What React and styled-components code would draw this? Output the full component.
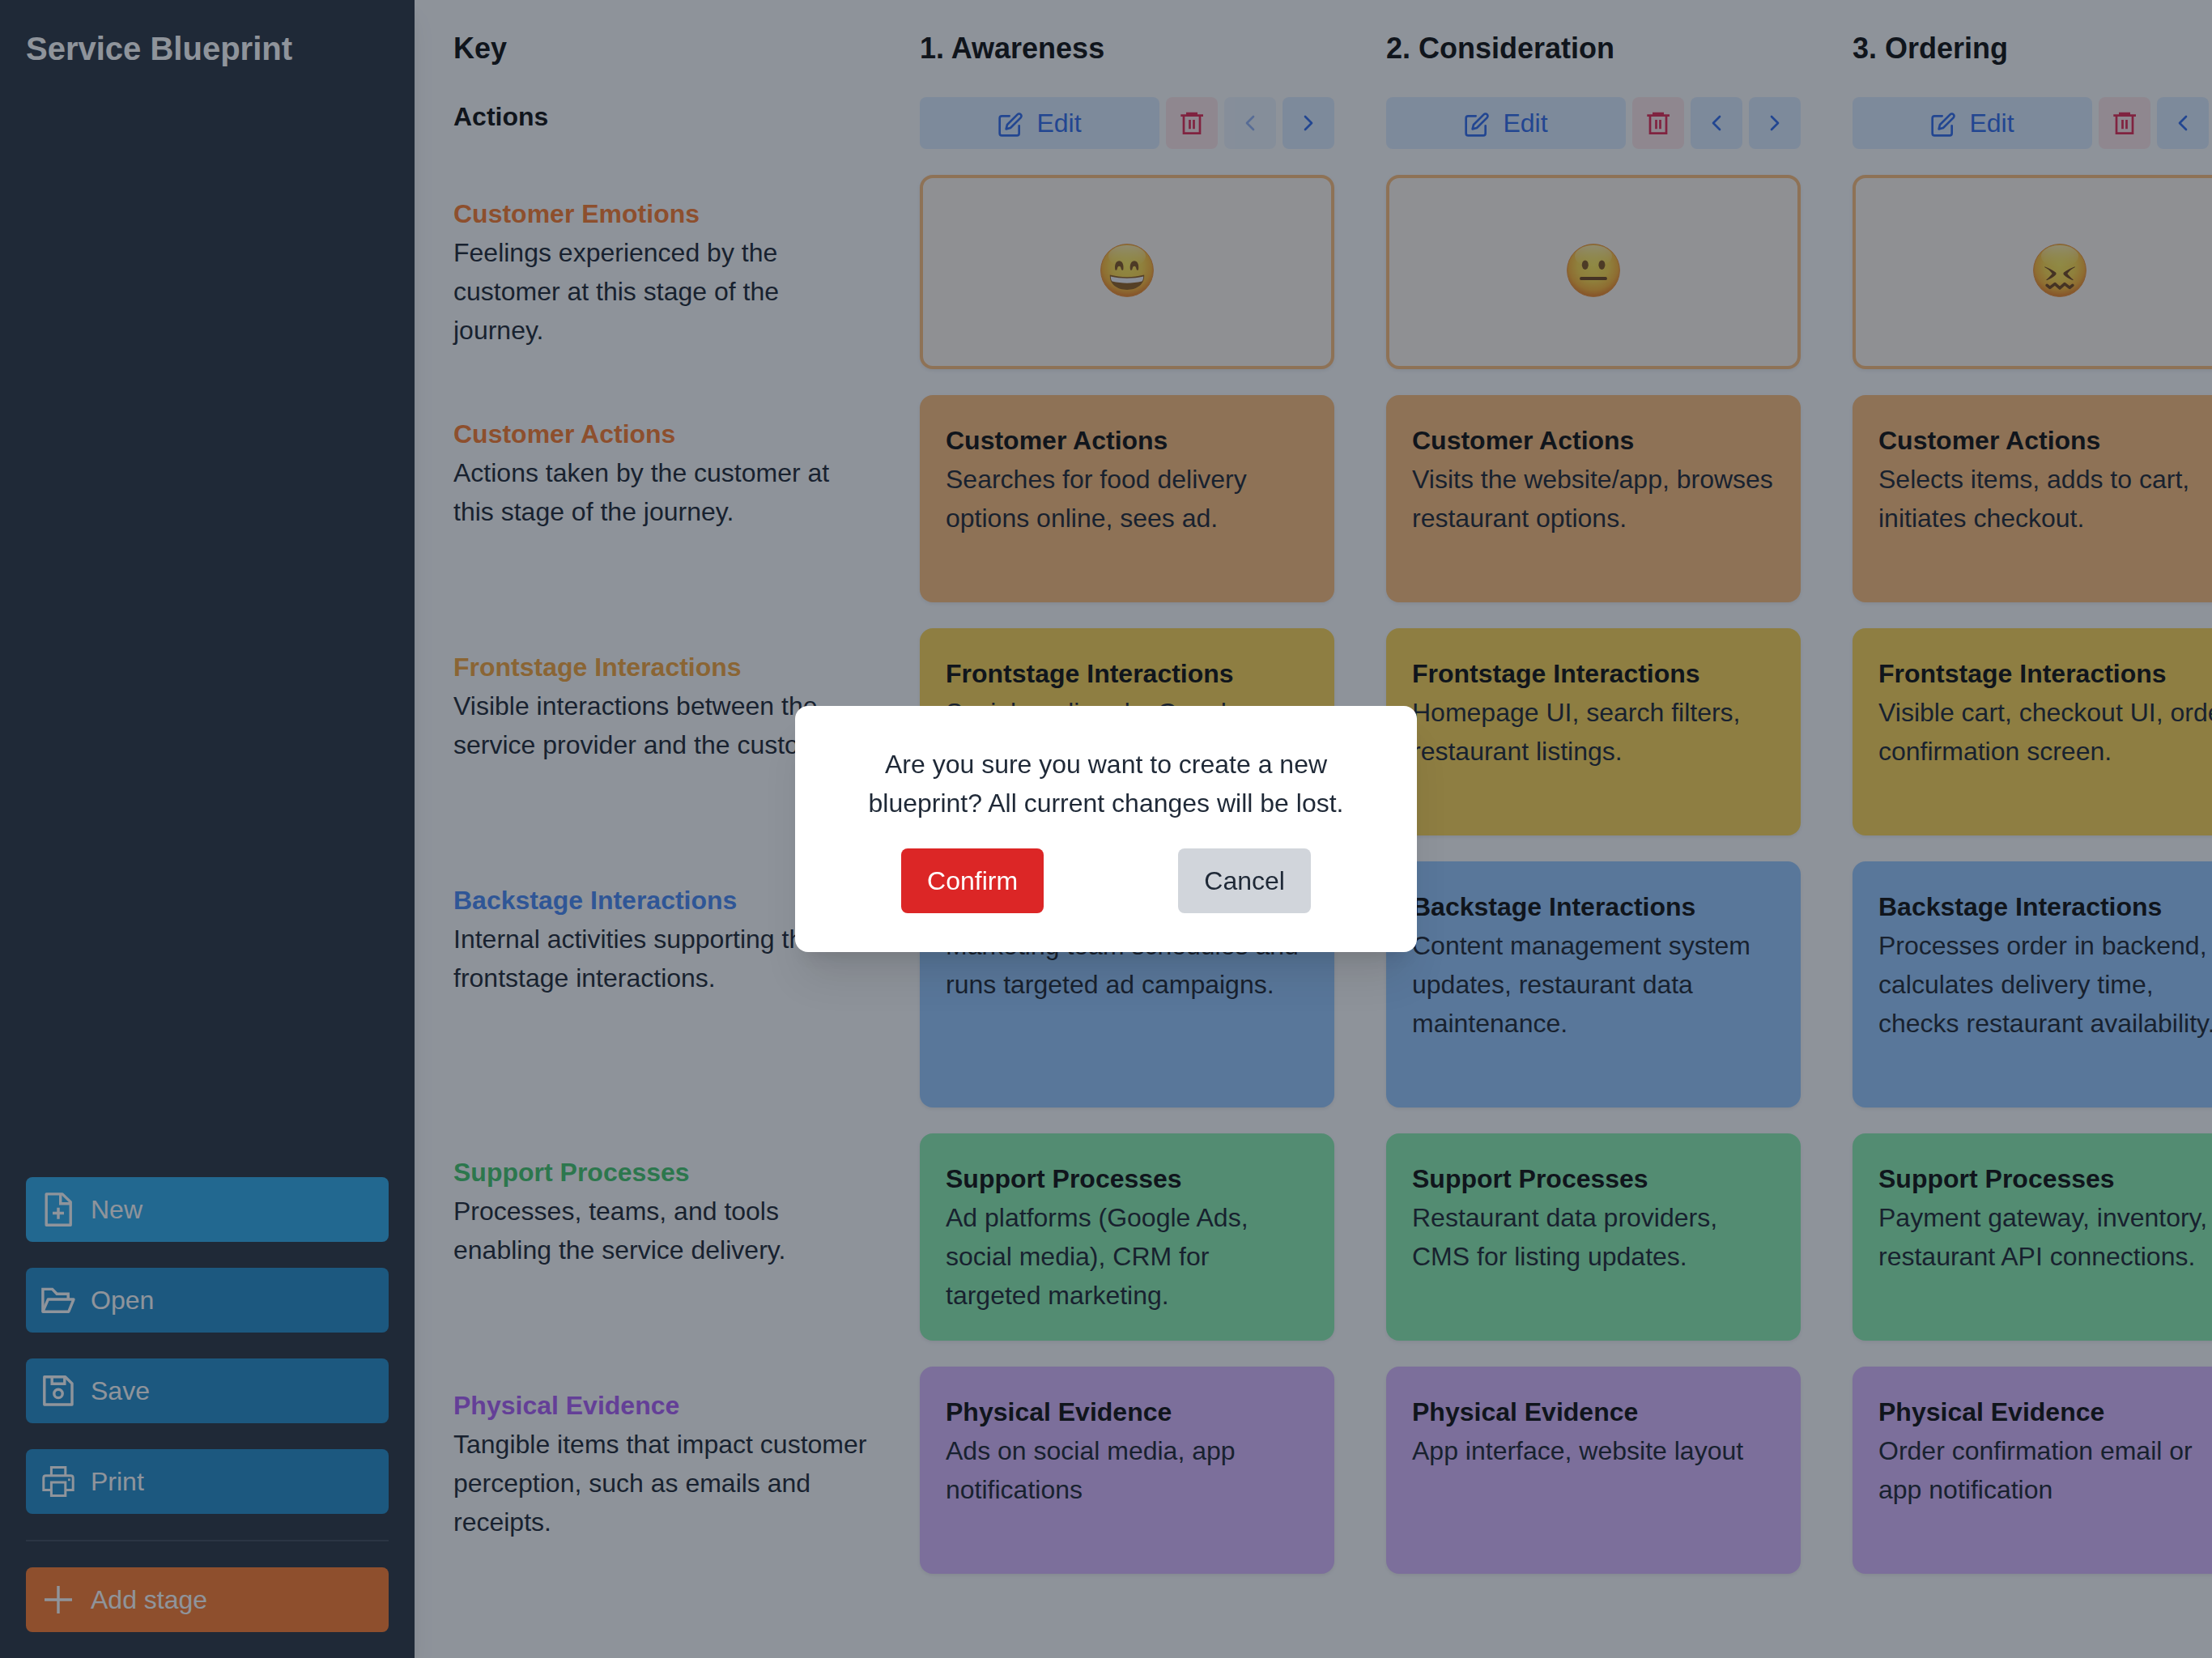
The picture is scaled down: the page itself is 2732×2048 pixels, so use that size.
import React, { Fragment } from "react";
import styled, { createGlobalStyle, css } from "styled-components";
import { FiChevronLeft, FiChevronRight, FiEdit } from "react-icons/fi";

const GlobalStyle = createGlobalStyle`
  *, *::before, *::after { box-sizing: border-box; }
  body {
    margin: 0;
    overflow: hidden;
    background: #fcfcfd;
    color: #111827;
    font-family: "Liberation Sans", Arial, sans-serif;
    font-size: 32px;
    line-height: 48px;
  }
  h1, h2, h3, p { margin: 0; }
  button { font: inherit; border: 0; cursor: pointer; }
`;

/* ---------- layout ---------- */

const Page = styled.div`
  display: flex;
  height: 100vh;
`;

const Sidebar = styled.aside`
  flex: 0 0 512px;
  display: flex;
  flex-direction: column;
  justify-content: space-between;
  padding: 32px;
  background: #1f2937;
  color: #fff;
  box-shadow: 0 20px 30px -6px rgba(0, 0, 0, 0.1), 0 8px 12px -4px rgba(0, 0, 0, 0.1);
`;

const AppTitle = styled.h1`
  font-size: 40px;
  line-height: 56px;
`;

const Menu = styled.nav`
  display: flex;
  flex-direction: column;
  gap: 32px;
`;

const menuTones = {
  blue: "#1887c7",
  bright: "#25a6e8",
  orange: "#fd7523",
};

const MenuButton = styled.button`
  display: flex;
  align-items: center;
  gap: 16px;
  padding: 16px;
  border-radius: 8px;
  background: ${({ $tone }) => menuTones[$tone]};
  color: inherit;
  text-align: left;

  svg {
    flex: none;
    width: 48px;
    height: 48px;
  }
`;

const Divider = styled.hr`
  width: 100%;
  height: 2px;
  margin: 0;
  border: 0;
  background: #374151;
`;

const Board = styled.main`
  flex: 1;
  min-width: 0;
  overflow: hidden;
  padding: 32px 48px;
`;

const Grid = styled.div`
  display: grid;
  grid-template-columns: repeat(4, 512px);
  gap: 32px 64px;
`;

/* ---------- board parts ---------- */

const ColumnTitle = styled.h2`
  color: #000;
  font-size: 36px;
  line-height: 56px;
`;

const RowTitle = styled.h3`
  color: ${({ $color }) => $color || "#000"};
  font-size: 32px;
`;

const KeyCell = styled.div`
  padding: 24px 0;
`;

const Actions = styled.div`
  display: flex;
  gap: 8px;
`;

const actionTones = {
  blue: css`
    background: #dbeafe;
    color: #2563eb;
  `,
  rose: css`
    background: #ffe4e6;
    color: #e11d48;
  `,
};

const ActionButton = styled.button`
  flex: ${({ $wide }) => ($wide ? "1" : "0 0 64px")};
  height: 64px;
  padding: 8px;
  border-radius: 8px;
  ${({ $tone }) => actionTones[$tone || "blue"]}

  svg {
    width: 32px;
    height: 32px;
    ${({ $wide }) =>
      $wide
        ? css`
            margin-right: 16px;
            vertical-align: text-bottom;
          `
        : css`
            display: block;
            margin: 0 auto;
          `}
  }

  &:disabled {
    opacity: 0.5;
    cursor: default;
  }
`;

const Card = styled.article`
  min-height: ${({ $tall }) => ($tall ? "304px" : "256px")};
  padding: 32px;
  border-radius: 16px;
  background: ${({ $fill }) => $fill};
  box-shadow: 0 2px 4px rgba(0, 0, 0, 0.08);
`;

const EmotionCard = styled.div`
  display: flex;
  align-items: center;
  justify-content: center;
  padding-bottom: 4px;
  border: 4px solid #fdba74;
  border-radius: 16px;
  background: #fff6ee;
  box-shadow: 0 2px 4px rgba(0, 0, 0, 0.08);

  svg {
    width: 66px;
    height: 66px;
  }
`;

/* ---------- dialog ---------- */

const Backdrop = styled.div`
  position: fixed;
  inset: 0;
  display: flex;
  align-items: center;
  justify-content: center;
  background: rgba(31, 41, 55, 0.5);
`;

const Dialog = styled.section`
  width: 768px;
  padding: 48px;
  border-radius: 16px;
  background: #fff;
  color: #1f2937;
  text-align: center;
  box-shadow: 0 40px 50px -10px rgba(0, 0, 0, 0.1), 0 16px 20px -12px rgba(0, 0, 0, 0.1);
`;

const DialogActions = styled.div`
  display: flex;
  justify-content: space-around;
  margin-top: 32px;
`;

const DialogButton = styled.button`
  padding: 16px 32px;
  border-radius: 8px;
  background: ${({ $danger }) => ($danger ? "#dc2626" : "#d1d5db")};
  color: ${({ $danger }) => ($danger ? "#fff" : "#1f2937")};
`;

/* ---------- icons ---------- */

const LineIcon = ({ children, width = 3.4 }) => (
  <svg viewBox="0 0 48 48" fill="none" stroke="currentColor" strokeWidth={width} aria-hidden="true">
    {children}
  </svg>
);

const NewIcon = () => (
  <LineIcon>
    <path strokeLinejoin="round" d="M9.2 4.9H29L39.2 14.8V43.2H9.2Z" />
    <path d="M26.7 5V16.7H39" />
    <path d="M24 21.7V35.7M17 28.5H31" />
  </LineIcon>
);

const OpenIcon = () => (
  <LineIcon>
    <path d="M4.9 38V10.4H16.6L22.2 16.2H36.2V23" />
    <path strokeLinejoin="round" d="M4.9 38.2L11.4 23H43L36.8 38.2Z" />
  </LineIcon>
);

const SaveIcon = () => (
  <LineIcon>
    <path strokeLinejoin="round" d="M6.8 6.8H32.6L41 15V41H6.8Z" />
    <path d="M16.2 7V15.2H31.8V7" />
    <circle cx="24" cy="27.4" r="5.2" />
  </LineIcon>
);

const PrintIcon = () => (
  <LineIcon width={3}>
    <path d="M15.4 16.5V6.4H32.8V16.5" />
    <path d="M15 34.4H5.8V19.5Q5.8 16.7 8.6 16.7H39.4Q42.2 16.7 42.2 19.5V34.4H33" />
    <path d="M15.4 25H32.8V41.6H15.4Z" />
    <rect x="36" y="20.4" width="2.8" height="2.8" fill="currentColor" stroke="none" />
  </LineIcon>
);

const PlusIcon = () => (
  <LineIcon>
    <path d="M24 7V41M7 24H41" />
  </LineIcon>
);

const TrashIcon = () => (
  <svg viewBox="0 0 32 32" aria-hidden="true">
    <path fill="currentColor" d="M9 2.7H23V5.4H9ZM2.3 5.3H30V8H2.3Z" />
    <path fill="none" stroke="currentColor" strokeWidth="2.7" d="M6 7V28.7H26V7" />
    <path fill="none" stroke="currentColor" strokeWidth="2.7" d="M13.5 12V23.3M18.5 12V23.3" />
  </svg>
);

const Face = ({ id, label, children }) => (
  <svg viewBox="0 0 66 66" role="img" aria-label={label}>
    <defs>
      <radialGradient id={`${id}-skin`} cx="0.5" cy="0.4" r="0.6">
        <stop offset="0" stopColor="#ffe94f" />
        <stop offset="0.5" stopColor="#ffd640" />
        <stop offset="0.78" stopColor="#fdb22c" />
        <stop offset="1" stopColor="#ec7a1a" />
      </radialGradient>
      <linearGradient id={`${id}-shine`} x1="0" y1="0" x2="0" y2="1">
        <stop offset="0" stopColor="#fffbd8" stopOpacity="0.7" />
        <stop offset="1" stopColor="#fff27a" stopOpacity="0" />
      </linearGradient>
    </defs>
    <circle cx="33" cy="33" r="32.4" fill={`url(#${id}-skin)`} stroke="#ee8e2c" strokeWidth="1" />
    <ellipse cx="33" cy="15.5" rx="23" ry="13.5" fill={`url(#${id}-shine)`} />
    {children}
  </svg>
);

const GrinningFace = () => (
  <Face id="grin" label="Happy">
    <path
      fill="#7b4c14"
      d="M18.2 31.5C17.4 25 19.8 21.2 23.3 21.2S29.2 25 28.4 31.5C28.2 33.4 26.4 33.2 25.8 31.2C25.2 28.8 24.6 27.8 23.3 27.8S21.4 28.8 20.8 31.2C20.2 33.2 18.4 33.4 18.2 31.5ZM36.9 31.5C36.1 25 38.5 21.2 42 21.2S47.9 25 47.1 31.5C46.9 33.4 45.1 33.2 44.5 31.2C43.9 28.8 43.3 27.8 42 27.8S40.1 28.8 39.5 31.2C38.9 33.2 37.1 33.4 36.9 31.5Z"
    />
    <path fill="#8a5614" d="M11.8 38.6C25 42 41 42 54.2 38.6C54.8 50 45.6 57 33 57S11.2 50 11.8 38.6Z" />
    <path fill="#f4f4fb" d="M12.8 40.4C26 43.4 40 43.4 53.2 40.4C53.2 43 52.6 45 51.4 46.6C39.4 49.4 26.6 49.4 14.6 46.6C13.4 45 12.8 43 12.8 40.4Z" />
  </Face>
);

const NeutralFace = () => (
  <Face id="neutral" label="Neutral">
    <ellipse cx="22.8" cy="26.2" rx="4" ry="5.8" fill="#7b4c14" />
    <ellipse cx="43.4" cy="26.2" rx="4" ry="5.8" fill="#7b4c14" />
    <rect x="16.2" y="41" width="33.6" height="4" rx="1.6" fill="#6b3d10" />
  </Face>
);

const ConfoundedFace = () => (
  <Face id="confounded" label="Frustrated">
    <path
      fill="#6b3d10"
      d="M14.2 28.2C19 30 24.5 32.4 28 35.6Q29.2 37 28 38.4C25.2 41 21.6 43.4 17 45.2C16.2 45 16.2 44.6 16.6 44.2C19.4 41.8 22 39.4 23.6 37C21.4 33.8 18.2 31 14.4 29.2ZM51.8 28.2C47 30 41.5 32.4 38 35.6Q36.8 37 38 38.4C40.8 41 44.4 43.4 49 45.2C49.8 45 49.8 44.6 49.4 44.2C46.6 41.8 44 39.4 42.4 37C44.6 33.8 47.8 31 51.6 29.2Z"
    />
    <path
      fill="none"
      stroke="#6b3d10"
      strokeWidth="3.6"
      strokeLinecap="round"
      strokeLinejoin="round"
      d="M17.2 51.4L20.8 54.4L27 49.6L33 54.8L39 49.6L45.2 54.4L48.8 51.4"
    />
  </Face>
);

/* ---------- data ---------- */

const layers = [
  {
    id: "customer",
    title: "Customer Actions",
    about: "Actions taken by the customer at this stage of the journey.",
    color: "#fb7523",
    fill: "#fdba74",
  },
  {
    id: "frontstage",
    title: "Frontstage Interactions",
    about: "Visible interactions between the service provider and the customer.",
    color: "#f5a030",
    fill: "#fcd34d",
  },
  {
    id: "backstage",
    title: "Backstage Interactions",
    about: "Internal activities supporting the frontstage interactions.",
    color: "#3f82f4",
    fill: "#93c5fd",
    tall: true,
  },
  {
    id: "support",
    title: "Support Processes",
    about: "Processes, teams, and tools enabling the service delivery.",
    color: "#38c463",
    fill: "#86efac",
  },
  {
    id: "evidence",
    title: "Physical Evidence",
    about: "Tangible items that impact customer perception, such as emails and receipts.",
    color: "#a855f7",
    fill: "#d8b4fe",
  },
];

const stages = [
  {
    name: "Awareness",
    Emotion: GrinningFace,
    customer: "Searches for food delivery options online, sees ad.",
    frontstage: "Social media ads, Google search results.",
    backstage: "Marketing team schedules and runs targeted ad campaigns.",
    support: "Ad platforms (Google Ads, social media), CRM for targeted marketing.",
    evidence: "Ads on social media, app notifications",
  },
  {
    name: "Consideration",
    Emotion: NeutralFace,
    customer: "Visits the website/app, browses restaurant options.",
    frontstage: "Homepage UI, search filters, restaurant listings.",
    backstage: "Content management system updates, restaurant data maintenance.",
    support: "Restaurant data providers, CMS for listing updates.",
    evidence: "App interface, website layout",
  },
  {
    name: "Ordering",
    Emotion: ConfoundedFace,
    customer: "Selects items, adds to cart, initiates checkout.",
    frontstage: "Visible cart, checkout UI, order confirmation screen.",
    backstage: "Processes order in backend, calculates delivery time, checks restaurant availability.",
    support: "Payment gateway, inventory, restaurant API connections.",
    evidence: "Order confirmation email or app notification",
  },
];

/* ---------- app ---------- */

export default function App() {
  return (
    <>
      <GlobalStyle />
      <Page>
        <Sidebar>
          <AppTitle>Service Blueprint</AppTitle>
          <Menu>
            <MenuButton $tone="bright"><NewIcon />New</MenuButton>
            <MenuButton $tone="blue"><OpenIcon />Open</MenuButton>
            <MenuButton $tone="blue"><SaveIcon />Save</MenuButton>
            <MenuButton $tone="blue"><PrintIcon />Print</MenuButton>
            <Divider />
            <MenuButton $tone="orange"><PlusIcon />Add stage</MenuButton>
          </Menu>
        </Sidebar>

        <Board>
          <Grid>
            <ColumnTitle>Key</ColumnTitle>
            {stages.map((stage, i) => (
              <ColumnTitle key={stage.name}>{`${i + 1}. ${stage.name}`}</ColumnTitle>
            ))}

            <RowTitle>Actions</RowTitle>
            {stages.map((stage, i) => (
              <Actions key={stage.name}>
                <ActionButton $wide><FiEdit />Edit</ActionButton>
                <ActionButton $tone="rose" aria-label={`Delete ${stage.name}`}><TrashIcon /></ActionButton>
                <ActionButton disabled={i === 0} aria-label={`Move ${stage.name} left`}><FiChevronLeft /></ActionButton>
                <ActionButton aria-label={`Move ${stage.name} right`}><FiChevronRight /></ActionButton>
              </Actions>
            ))}

            <KeyCell>
              <RowTitle $color="#fb7523">Customer Emotions</RowTitle>
              <p>Feelings experienced by the customer at this stage of the journey.</p>
            </KeyCell>
            {stages.map(({ name, Emotion }) => (
              <EmotionCard key={name}><Emotion /></EmotionCard>
            ))}

            {layers.map((layer) => (
              <Fragment key={layer.id}>
                <KeyCell>
                  <RowTitle $color={layer.color}>{layer.title}</RowTitle>
                  <p>{layer.about}</p>
                </KeyCell>
                {stages.map((stage) => (
                  <Card key={stage.name} $fill={layer.fill} $tall={layer.tall}>
                    <RowTitle>{layer.title}</RowTitle>
                    <p>{stage[layer.id]}</p>
                  </Card>
                ))}
              </Fragment>
            ))}
          </Grid>
        </Board>
      </Page>

      <Backdrop>
        <Dialog role="dialog" aria-modal="true" aria-labelledby="confirm-text">
          <p id="confirm-text">
            Are you sure you want to create a new blueprint? All current changes will be lost.
          </p>
          <DialogActions>
            <DialogButton $danger>Confirm</DialogButton>
            <DialogButton>Cancel</DialogButton>
          </DialogActions>
        </Dialog>
      </Backdrop>
    </>
  );
}
